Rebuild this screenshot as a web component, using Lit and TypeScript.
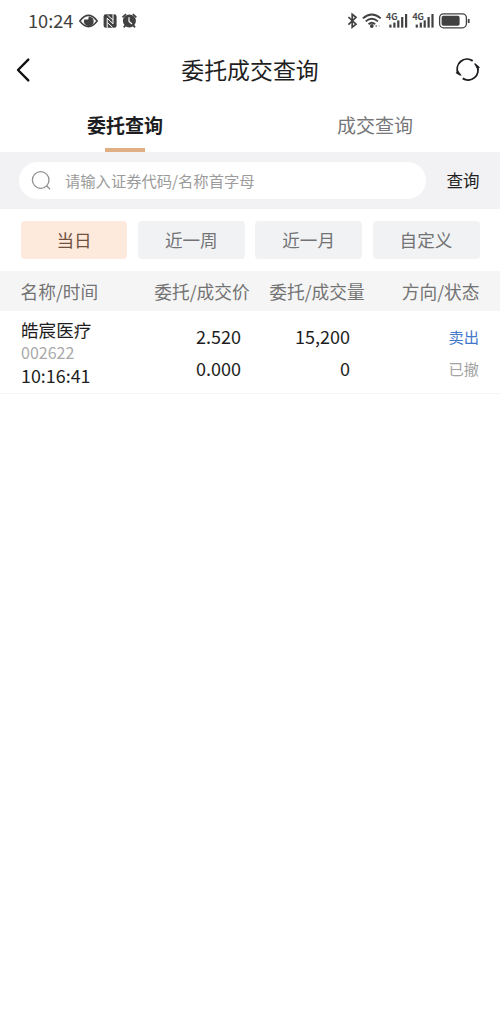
import { LitElement, html, css, svg } from "lit";
import { customElement, state } from "lit/decorators.js";

interface Order {
  name: string;
  code: string;
  time: string;
  price: string;
  dealPrice: string;
  qty: string;
  dealQty: string;
  side: string;
  status: string;
}

const ORDERS: Order[] = [
  {
    name: "皓宸医疗", code: "002622", time: "10:16:41",
    price: "2.520", dealPrice: "0.000",
    qty: "15,200", dealQty: "0",
    side: "卖出", status: "已撤",
  },
];

const signalBars = (x: number) => svg`
  <g fill="#414141">
    <rect x=${x + 2.8} y="24.6" width="2.2" height="3"/>
    <rect x=${x + 6.8} y="22.6" width="2.2" height="5"/>
    <rect x=${x + 10.7} y="20.4" width="2.2" height="7.2"/>
    <rect x=${x + 14.6} y="17" width="2.2" height="10.6"/>
    <rect x=${x + 18.5} y="14" width="2.2" height="13.6"/>
  </g>
  <text x=${x - 0.5} y="20" class="net">4G</text>`;

@customElement("status-bar")
class StatusBar extends LitElement {
  static styles = css`
    :host { display: flex; justify-content: space-between; height: 42px; padding: 0 28px 0 28px; }
    .left { display: flex; }
    .time { font-size: 18.2px; line-height: 41px; color: #414141; width: 50px; white-space: nowrap; }
    .net { font: 500 9px "Noto Sans CJK SC", sans-serif; fill: #414141; stroke: #414141; stroke-width: .2px; }
    svg { display: block; }
  `;
  render() {
    return html`
      <div class="left">
        <span class="time">10:24</span>
        <svg width="64" height="42" viewBox="78 0 64 42">
          <path d="M79.8 21Q88.5 9.8 97.2 21Q88.5 32.2 79.8 21Z" fill="none" stroke="#414141" stroke-width="1.6" stroke-linejoin="round"/>
          <path d="M88.8 16.4L88.2 19.4L84.2 19.6A4.9 4.9 0 1 0 88.8 16.4Z" fill="#414141"/>
          <rect x="103.6" y="14.3" width="13" height="13.4" rx="2.2" fill="#414141"/>
          <path d="M107.2 28V18.2L113 23.8V14M107.6 15.2L113 20M107.4 22.6L112.6 27.4" fill="none" stroke="#fff" stroke-width="1"/>
          <circle cx="129.4" cy="21" r="6.5" fill="#414141"/>
          <path d="M122.5 17.3L126 14.2M136.3 17.3L132.8 14.2M125.4 25.4L123.8 27.4M133.4 25.4L135 27.4" stroke="#414141" stroke-width="1.8" fill="none"/>
          <path d="M129 17.2V21.4L132 24" fill="none" stroke="#fff" stroke-width="1.2"/>
        </svg>
      </div>
      <svg width="126" height="42" viewBox="346 0 126 42">
        <path d="M348.4 17L356 24.2L352.2 27.3V14.3L356 17.4L348.4 24.6" fill="none" stroke="#414141" stroke-width="1.7"/>
        <g fill="none" stroke="#414141" stroke-width="1.9">
          <path d="M362.9 18.4Q371.8 10.8 380.7 18.4"/>
          <path d="M365.7 21.4Q371.8 16.2 377.9 21.4"/>
          <path d="M368.5 24.2Q371.8 21.5 375.1 24.2"/>
        </g>
        <circle cx="371.8" cy="26" r="1.9" fill="#414141"/>
        <circle cx="376.2" cy="26" r=".9" fill="#888"/>
        <circle cx="379.2" cy="26" r=".8" fill="#bbb"/>
        ${signalBars(386.5)}
        ${signalBars(412.9)}
        <rect x="439.6" y="13.8" width="26.8" height="14" rx="4" fill="none" stroke="#414141" stroke-width="1.3"/>
        <rect x="441.6" y="15.8" width="18" height="10" rx="1.8" fill="#414141"/>
        <path d="M468.7 19V23" stroke="#414141" stroke-width="1.8"/>
      </svg>`;
  }
}

@customElement("app-root")
class AppRoot extends LitElement {
  static styles = css`
    :host {
      display: flex; flex-direction: column; width: 500px; height: 1020px; overflow: hidden;
      background: #fff; color: #1e1e22;
      font-family: "Noto Sans CJK SC", sans-serif;
    }
    .title-bar { display: grid; grid-template-columns: 60px 1fr 60px; height: 56px; align-items: center; }
    .title-bar h1 { margin: 0; font-size: 22.9px; font-weight: 400; line-height: 55px; height: 56px; text-align: center; }
    .title-bar svg { display: block; }
    .tabs { display: grid; grid-template-columns: 1fr 1fr; height: 53.5px; }
    .tab { display: flex; flex-direction: column; align-items: center; justify-content: space-between; font-size: 19px; line-height: 53px; color: #77777a; }
    .tab.active { color: #1e1e22; font-weight: 700; }
    .tab span { height: 49px; }
    .tab.active::after { content: ""; width: 40px; height: 4px; background: #dfae84; }
    .search { display: flex; align-items: center; height: 57.5px; padding: 0 20.5px 0 19px; background: #f2f2f4; justify-content: space-between; }
    .field { display: flex; align-items: center; width: 407px; height: 36.5px; border-radius: 19px; background: #fff; font-size: 15.3px; color: #9b9b9b; line-height: 36px; }
    .field svg { margin: 0 13px 0 12px; }
    .field span { height: 36px; }
    .go { font-size: 16.5px; line-height: 37px; }
    .chips { display: grid; grid-template-columns: repeat(4, 1fr); gap: 10.4px; padding: 12px 20.5px; }
    .chip { height: 38px; line-height: 38px; border-radius: 4px; text-align: center; font-size: 17.6px; background: #f1f2f4; color: #737375; }
    .chip.active { background: #fdeadc; color: #71503f; }
    .head { display: grid; grid-template-columns: 133.8px 115px 114.2px 96px; height: 40px; line-height: 40px; padding: 0 20.5px; background: #f5f5f5; color: #737373; font-size: 17.7px; }
    .head span { white-space: nowrap; }
    .head .end { text-align: right; }
    .row { display: grid; grid-template-columns: 120px 100px 109px 129px; height: 82px; padding-left: 21px; border-bottom: 1px solid #f4f4f4; font-size: 18px; }
    .who { display: flex; flex-direction: column; padding-top: 7px; line-height: 23px; }
    .who .name { font-size: 17.6px; }
    .who .code { font-size: 16px; color: #aaaaaa; }
    .who .time { font-size: 17.9px; }
    .pair { display: flex; flex-direction: column; padding-top: 9px; line-height: 32px; text-align: right; }
    .pair.state { font-size: 15.3px; color: #a3a3a3; }
    .sell { color: #4377c9; }
  `;

  @state() tab = 0;
  @state() range = 0;

  render() {
    return html`
      <status-bar></status-bar>
      <div class="title-bar">
        <svg width="60" height="56" viewBox="0 42 60 56">
          <path d="M28.3 59.6L18 70L28.3 80.4" fill="none" stroke="#111" stroke-width="2.4" stroke-linecap="round" stroke-linejoin="round"/>
        </svg>
        <h1>委托成交查询</h1>
        <svg width="60" height="56" viewBox="440 42 60 56">
          <g fill="none" stroke="#1e1e22" stroke-width="1.9">
            <path d="M458.2 73.4A9.9 9.9 0 0 1 472.7 60.9"/>
            <path d="M477.1 66A9.9 9.9 0 0 1 462.7 78.4"/>
          </g>
          <path d="M455.6 72.9L458 70.8L461.8 75.6L459.8 75.6Z" fill="#1e1e22"/>
          <path d="M474 63.4L475.6 63.6L480 67.4L477.2 69Z" fill="#1e1e22"/>
        </svg>
      </div>
      <div class="tabs">
        ${["委托查询", "成交查询"].map((t, i) => html`
          <div class="tab ${i === this.tab ? "active" : ""}" @click=${() => (this.tab = i)}><span>${t}</span></div>`)}
      </div>
      <div class="search">
        <div class="field">
          <svg width="21" height="21" viewBox="0 0 21 21" fill="none" stroke="#909090" stroke-width="1.3">
            <circle cx="9.7" cy="10" r="8.3"/><path d="M15.7 16L18.6 18.8" stroke-linecap="round"/>
          </svg>
          <span>请输入证券代码/名称首字母</span>
        </div>
        <span class="go">查询</span>
      </div>
      <div class="chips">
        ${["当日", "近一周", "近一月", "自定义"].map((t, i) => html`
          <div class="chip ${i === this.range ? "active" : ""}" @click=${() => (this.range = i)}>${t}</div>`)}
      </div>
      <div class="head">
        <span>名称/时间</span><span>委托/成交价</span><span>委托/成交量</span><span class="end">方向/状态</span>
      </div>
      ${ORDERS.map((o) => html`
        <div class="row">
          <div class="who">
            <span class="name">${o.name}</span><span class="code">${o.code}</span><span class="time">${o.time}</span>
          </div>
          <div class="pair"><span>${o.price}</span><span>${o.dealPrice}</span></div>
          <div class="pair"><span>${o.qty}</span><span>${o.dealQty}</span></div>
          <div class="pair state"><span class="sell">${o.side}</span><span>${o.status}</span></div>
        </div>`)}
    `;
  }
}
